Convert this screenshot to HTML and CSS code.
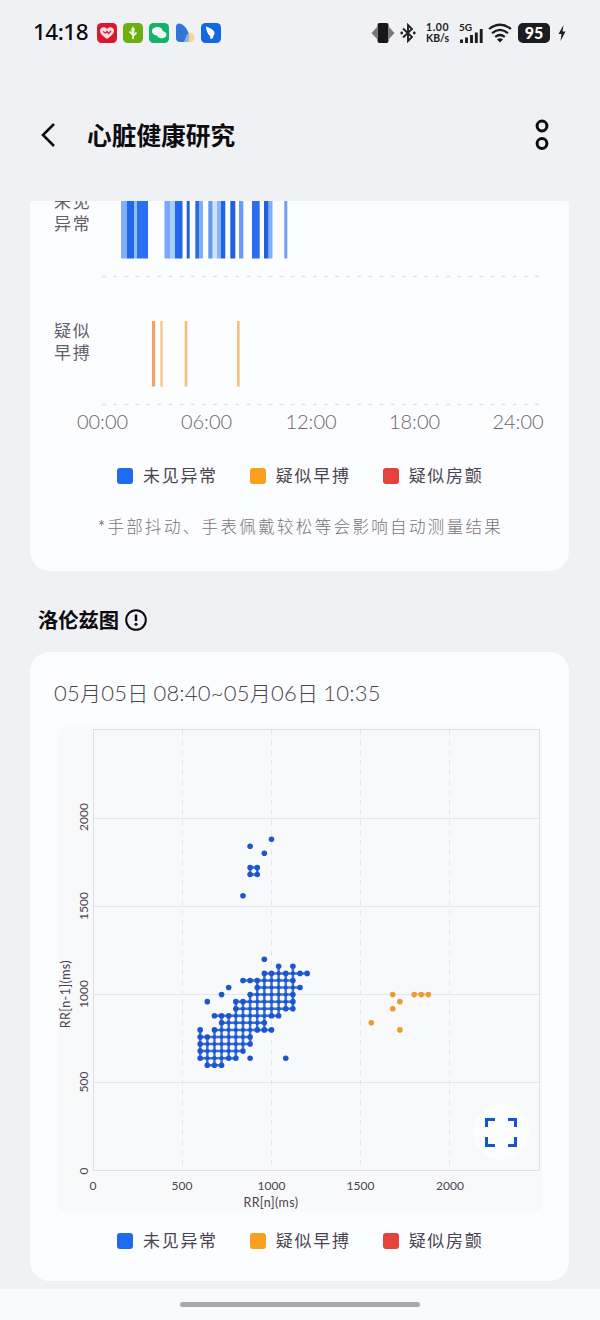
FILE: index.html
```
<!DOCTYPE html>
<html lang="zh">
<head>
    <meta charset="UTF-8">
    <meta name="viewport" content="width=device-width, initial-scale=1.0">
    <title>心脏健康研究</title>
    <link rel="stylesheet" href="styles.css">
</head>
<body>

    <div class="status">
        <span class="time">14:18</span>
        <div class="apps">
            <svg width="20" height="20" viewBox="0 0 20 20">
                <rect width="20" height="20" rx="4.5" fill="#d9182b"/>
                <path d="M10 16C5 12.500 3 10.500 3 7.800C3 4 8 3 10 6C12 3 17 4 17 7.800C17 10.500 15 12.500 10 16Z" fill="#f9dfe2"/>
                <path d="M6 8.500L8.500 10L10 8.500L11.500 10.500L14 8" fill="none" stroke="#d9182b" stroke-width="1.300"/>
            </svg>
            <svg width="20" height="20" viewBox="0 0 20 20">
                <rect width="20" height="20" rx="4.500" fill="#6fae10"/>
                <path d="M10 16V9M10 12L6.500 8.500M10 13L13.500 9.500" fill="none" stroke="#eef7d8" stroke-width="1.800"/>
                <path d="M10 3.500C12.500 6 12 8 10 10C8 8 7.500 6 10 3.500Z" fill="#eef7d8"/>
            </svg>
            <svg width="20" height="20" viewBox="0 0 20 20">
                <rect width="20" height="20" rx="4.500" fill="#14b36b"/>
                <ellipse cx="8.300" cy="8.300" rx="5.300" ry="4.200" fill="#fff"/>
                <ellipse cx="12.700" cy="11.700" rx="4.700" ry="3.700" fill="#e9faf2"/>
            </svg>
            <svg width="20" height="20" viewBox="0 0 20 20">
                <circle cx="14.500" cy="14.500" r="5" fill="#f2d795"/>
                <path d="M1 4Q1 0 5 .5C9 2 13 6 13.500 11Q13 15 11.500 19H5Q1 19 1 15Z" fill="#3474d8"/>
                <path d="M12 11Q16 12 13 19H9Z" fill="#8db3e5"/>
            </svg>
            <svg width="20" height="20" viewBox="0 0 20 20">
                <rect width="20" height="20" rx="4.500" fill="#1269e3"/>
                <path d="M5 3.500C9 5 14 7 13.500 10.500L11.500 15.500L9.500 16L9 13C6.500 11 5 7 5 3.500Z" fill="#fff"/>
            </svg>
        </div>
        <div class="signals">
            <svg width="24" height="20" viewBox="0 0 24 20">
                <path d="M6 4L.5 10L6 16ZM18 4L23.500 10L18 16Z" fill="#77777c"/>
                <rect x="6.500" y="0" width="11" height="20" rx="2" fill="#17171b"/>
            </svg>
            <svg class="bt" width="16" height="20" viewBox="0 0 16 20">
                <path d="M3 5.500L12 14L8 18V2L12 6L3 14.500" fill="none" stroke="#222227" stroke-width="1.900"/>
                <circle cx="1.700" cy="10" r="1.400" fill="#222227"/>
                <circle cx="14.300" cy="10" r="1.400" fill="#222227"/>
            </svg>
            <div class="speed"><span>1.00</span><span>KB/s</span></div>
            <div class="cell">
                <span>5G</span>
                <svg width="24" height="14" viewBox="0 0 24 14">
                    <path d="M2.500 14V10.500M7.500 14V8.500M12.500 14V6M17.300 14V3.500M22.200 14V0" stroke="#1b1b20" stroke-width="2.900"/>
                </svg>
            </div>
            <svg class="wifi" width="24" height="20" viewBox="0 0 24 20">
                <path d="M1 6Q12-2.500 23 6M4 10.200Q12 3.500 20 10.200M7.200 14Q12 10 16.800 14" fill="none" stroke="#1b1b20" stroke-width="2.200"/>
                <path d="M9 16.500Q12 14 15 16.500L12 19.500Z" fill="#1b1b20"/>
            </svg>
            <span class="battery">95</span>
            <svg class="bolt" width="8" height="16" viewBox="0 0 8 16">
                <path d="M5.500 0L.5 9H3.500L2.500 16L7.500 6.500H4.500Z" fill="#1b1b20"/>
            </svg>
        </div>
    </div>

    <div class="header">
        <svg width="16" height="26" viewBox="0 0 16 26">
            <path d="M14 2L3 13L14 24" fill="none" stroke="#0c0c10" stroke-width="2.600"/>
        </svg>
        <h1>心脏健康研究</h1>
        <svg class="more" width="14" height="32" viewBox="0 0 14 32">
            <circle cx="7" cy="7" r="4.900" fill="none" stroke="#0c0c10" stroke-width="3"/>
            <circle cx="7" cy="24.500" r="4.900" fill="none" stroke="#0c0c10" stroke-width="3"/>
        </svg>
    </div>

    <div class="card strip-card">
        <svg class="strip" width="539" height="240" viewBox="30 201 539 240">
            <g class="row-label">
                <text x="54" y="208">未见</text>
                <text x="54" y="230">异常</text>
                <text x="54" y="336.500">疑似</text>
                <text x="54" y="358.500">早搏</text>
            </g>
            <path class="dash" d="M102 276.500H545M102 404.500H545"/>
            <g id="strips"></g>
            <g class="hours">
                <text x="102.500" y="428.500">00:00</text>
                <text x="206.500" y="428.500">06:00</text>
                <text x="311" y="428.500">12:00</text>
                <text x="414.500" y="428.500">18:00</text>
                <text x="518" y="428.500">24:00</text>
            </g>
        </svg>
        <div class="legend">
            <span class="item"><i class="blue"></i>未见异常</span>
            <span class="item"><i class="orange"></i>疑似早搏</span>
            <span class="item"><i class="red"></i>疑似房颤</span>
        </div>
        <p class="note"><b>*</b>手部抖动、手表佩戴较松等会影响自动测量结果</p>
    </div>

    <div class="section">
        <h2>洛伦兹图</h2>
        <svg width="22" height="22" viewBox="0 0 22 22">
            <circle cx="11" cy="11" r="9.800" fill="none" stroke="#0c0c10" stroke-width="2"/>
            <path d="M11 5.500V12" stroke="#0c0c10" stroke-width="2.500"/>
            <circle cx="11" cy="15.200" r="1.500" fill="#0c0c10"/>
        </svg>
    </div>

    <div class="card plot-card">
        <p class="range">05<b>月</b>05<b>日</b><s></s>08:40~05<b>月</b>06<b>日</b><s></s>10:35</p>
        <svg class="plot" width="484" height="484" viewBox="58 727 484 484">
            <rect class="plot-bg" x="58" y="727" width="484" height="484" rx="8"/>
            <path class="grid" d="M94 818.500H540M94 906.500H540M94 994.500H540M94 1082.500H540"/>
            <path class="grid-dash" d="M182.500 730V1171M271.500 730V1171M360.500 730V1171M449.500 730V1171"/>
            <rect class="frame" x="93.500" y="729.500" width="446" height="441"/>
            <g id="points"></g>
            <g class="ticks">
                <text x="93" y="1189.500">0</text>
                <text x="182" y="1189.500">500</text>
                <text x="271.500" y="1189.500">1000</text>
                <text x="360.500" y="1189.500">1500</text>
                <text x="450" y="1189.500">2000</text>
                <text class="unit" x="271" y="1207">RR[n](ms)</text>
                <text transform="translate(87.500 1171) rotate(-90)">0</text>
                <text transform="translate(87.500 1082) rotate(-90)">500</text>
                <text transform="translate(87.500 994) rotate(-90)">1000</text>
                <text transform="translate(87.500 906) rotate(-90)">1500</text>
                <text transform="translate(87.500 817) rotate(-90)">2000</text>
                <text class="unit" transform="translate(70 994) rotate(-90)">RR[n-1](ms)</text>
            </g>
            <circle cx="501" cy="1132" r="28" fill="#fcfdff"/>
            <path class="expand" d="M486.500 1127V1119.500H495M508 1119.500H515.500V1127M515.500 1137V1145.500H508M495 1145.500H486.500V1137"/>
        </svg>
        <div class="legend">
            <span class="item"><i class="blue"></i>未见异常</span>
            <span class="item"><i class="orange"></i>疑似早搏</span>
            <span class="item"><i class="red"></i>疑似房颤</span>
        </div>
    </div>

    <div class="home"><span></span></div>

    <script src="chart.js"></script>

</body>
</html>
```
FILE: styles.css
```
* {
    box-sizing: border-box;
}
body {
    margin: 0;
    width: 600px;
    height: 1320px;
    overflow: hidden;
    background-color: #f0f1f5;
    font-family: Lato, "Noto Sans CJK SC", sans-serif;
    color: #4b4450;
}
h1, h2, p {
    margin: 0;
}
svg {
    display: block;
    flex: none;
}
.status {
    display: flex;
    align-items: center;
    height: 66px;
    padding: 0 34px 0 33px;
}
.time {
    width: 64px;
    font-family: "Noto Sans", sans-serif;
    font-size: 22.5px;
    font-weight: 500;
    letter-spacing: -0.5px;
    line-height: 30px;
    margin-top: -2px;
    color: #0c0c10;
    white-space: nowrap;
}
.apps {
    display: flex;
    gap: 6px;
}
.signals {
    display: flex;
    align-items: center;
    margin-left: auto;
    color: #1b1b20;
}
.bt {
    margin-left: 5px;
}
.speed {
    display: flex;
    flex-direction: column;
    width: 25px;
    margin-left: 10px;
    font-size: 10.5px;
    font-weight: 700;
    line-height: 11px;
}
.speed span:first-child {
    letter-spacing: 0.6px;
}
.cell {
    width: 24px;
    height: 20px;
    margin-left: 8px;
}
.cell span {
    display: block;
    height: 6px;
    font-size: 10px;
    font-weight: 700;
    line-height: 8px;
}
.wifi {
    margin-left: 5px;
}
.battery {
    width: 32px;
    height: 20px;
    margin-left: 6px;
    border-radius: 5px;
    background-color: #1b1b20;
    color: #fff;
    font-size: 16px;
    font-weight: 900;
    line-height: 20px;
    text-align: center;
}
.bolt {
    margin-left: 8px;
}
.header {
    display: flex;
    align-items: center;
    height: 135px;
    padding: 2px 51px 0 40px;
}
.header h1 {
    margin: 2px 0 0 31px;
    font-size: 24.7px;
    font-weight: 700;
    line-height: 36px;
    color: #0c0c10;
}
.header .more {
    margin-left: auto;
}
.card {
    width: 539px;
    margin-left: 30px;
    background-color: #fcfdfe;
}
.strip-card {
    height: 370px;
    border-radius: 3px 3px 20px 20px;
}
.row-label {
    font-size: 17px;
    letter-spacing: 1.8px;
    fill: #665e6b;
}
.dash {
    stroke: #e2e3e7;
    stroke-width: 1.5;
    stroke-dasharray: 4 7.1;
    fill: none;
}
.hours {
    font-size: 20px;
    font-weight: 300;
    fill: #6b6670;
    text-anchor: middle;
}
.legend {
    display: flex;
    gap: 32px;
    padding-left: 87px;
}
.item {
    display: flex;
    align-items: center;
    height: 24px;
    font-size: 17px;
    line-height: 22px;
    letter-spacing: 1.7px;
}
.item i {
    width: 16px;
    height: 16px;
    margin-right: 10px;
    border-radius: 3px;
}
.strip-card .legend {
    margin-top: 23px;
}
.blue {
    background-color: #1f6bf0;
}
.orange {
    background-color: #f9a01f;
}
.red {
    background-color: #e5423a;
}
.note {
    margin-top: 27px;
    padding-left: 68px;
    font-size: 16.5px;
    font-weight: 300;
    line-height: 24px;
    letter-spacing: 2.35px;
    color: #77727c;
    white-space: nowrap;
}
.note b {
    font-weight: 400;
}
.section {
    display: flex;
    align-items: center;
    height: 81px;
    padding: 16px 0 0 38px;
    gap: 6px;
}
.section h2 {
    margin-top: -2px;
    font-size: 20.3px;
    font-weight: 700;
    color: #0c0c10;
}
.plot-card {
    height: 629px;
    padding: 23px 0 0 24px;
    border-radius: 20px;
}
.range {
    height: 52px;
    font-size: 22px;
    font-weight: 300;
    line-height: 36px;
    letter-spacing: 0.22px;
    white-space: nowrap;
}
.range b {
    font-size: 21px;
    font-weight: 300;
}
.range s {
    display: inline-block;
    width: 5px;
}
.plot {
    margin-left: 4px;
}
.plot-bg {
    fill: #f8f9fb;
}
.grid, .grid-dash, .frame {
    fill: none;
    stroke: #e4e6ea;
}
.grid-dash {
    stroke-dasharray: 5 5;
}
.frame {
    stroke: #dddfe4;
}
.ticks {
    font-size: 12px;
    fill: #4b4450;
    text-anchor: middle;
}
.unit {
    font-size: 12.5px;
    letter-spacing: 0.4px;
}
.expand {
    fill: none;
    stroke: #1556cf;
    stroke-width: 3;
}
.plot-card .legend {
    margin-top: 18px;
    padding-left: 63px;
}
.home {
    display: flex;
    justify-content: center;
    height: 31px;
    margin-top: 8px;
    padding-top: 13px;
    background-color: #f9fafd;
}
.home span {
    width: 240px;
    height: 5px;
    border-radius: 3px;
    background-color: #a9aaad;
}
```
FILE: chart.js
```
const NS = 'http://www.w3.org/2000/svg';

function add(parent, tag, attrs) {
    const el = document.createElementNS(NS, tag);
    for (const key in attrs) el.setAttribute(key, attrs[key]);
    parent.appendChild(el);
}

// [x, width, color]
const normal = [
    [121, 6, '#7fb0fb'], [127, 7, '#2368ec'], [134, 3, '#8fc0fd'], [137, 11, '#2b70f3'],
    [164.5, 5.5, '#79a8f8'], [170, 5, '#a5cefd'], [175, 7.5, '#2368ec'],
    [186.7, 3, '#2261d8'], [195.3, 3.7, '#2d6be6'], [199, 4, '#81aff6'],
    [208.3, 4.4, '#6799f0'], [212.7, 4.3, '#cfe2fd'], [217, 4, '#88b4fa'], [221, 4.3, '#2264e4'],
    [230.3, 5, '#2060dc'], [239, 4.3, '#699df3'], [252, 7.7, '#2b6df0'],
    [264, 4.7, '#2060dc'], [268.7, 3.8, '#81aff6'], [284.3, 3, '#72a0ee']
];
const early = [
    [152, 3.2, '#f0a45f'], [160.3, 2.4, '#f8c48f'], [184.7, 2.6, '#f8bd7e'], [237, 2.6, '#f8bd7e']
];

const strips = document.getElementById('strips');
normal.forEach(([x, width, fill]) => add(strips, 'rect', { x, y: 201, width, height: 57.5, fill }));
early.forEach(([x, width, fill]) => add(strips, 'rect', { x, y: 321, width, height: 65.5, fill }));

// RR[n-1]: [from, to] ranges of RR[n], step 40ms
const bluePoints = {
    1880: [[1000, 1000]],
    1840: [[880, 880]],
    1800: [[960, 960]],
    1720: [[880, 920]],
    1680: [[880, 920]],
    1560: [[840, 840]],
    1200: [[960, 960]],
    1160: [[1040, 1040], [1120, 1120]],
    1120: [[960, 1200]],
    1080: [[840, 1120]],
    1040: [[760, 760], [920, 1160]],
    1000: [[720, 720], [880, 1120]],
    960: [[640, 640], [800, 1120]],
    920: [[800, 1120]],
    880: [[680, 1040]],
    840: [[720, 960]],
    800: [[600, 600], [680, 1000]],
    760: [[600, 880]],
    720: [[600, 880]],
    680: [[600, 840]],
    640: [[600, 800], [880, 880], [1080, 1080]],
    600: [[640, 720]]
};
const orangePoints = {
    1000: [[1680, 1680], [1800, 1880]],
    960: [[1720, 1720]],
    920: [[1680, 1680]],
    840: [[1560, 1560]],
    800: [[1720, 1720]]
};

function drawPoints(data, fill, join) {
    const parent = document.getElementById('points');
    const seen = new Set();
    const px = v => 93.2 + v * 0.1783;
    const py = v => 1171.2 - v * 0.1766;
    for (const y in data) {
        data[y].forEach(([from, to]) => {
            for (let x = from; x <= to; x += 40) seen.add(x + ',' + y);
        });
    }
    const has = (x, y) => seen.has(x + ',' + y);
    const all = [...seen].map(key => key.split(',').map(Number));
    let d = '';
    all.forEach(([x, y]) => {
        if (has(x + 40, y)) d += `M${px(x)} ${py(y)}H${px(x + 40)}`;
        if (has(x, y + 40)) d += `M${px(x)} ${py(y)}V${py(y + 40)}`;
    });
    add(parent, 'path', { d, stroke: join, 'stroke-width': 2.5 });
    all.forEach(([x, y]) => {
        // dots with neighbours on all sides are smaller so the gaps stay open
        const inner = has(x - 40, y) && has(x + 40, y) && has(x, y - 40) && has(x, y + 40);
        add(parent, 'circle', { cx: px(x), cy: py(y), r: inner ? 2.1 : 2.8, fill });
    });
}

drawPoints(bluePoints, '#1c55cc', '#3a70de');
drawPoints(orangePoints, '#ee9a30', '#f6c27c');
```
